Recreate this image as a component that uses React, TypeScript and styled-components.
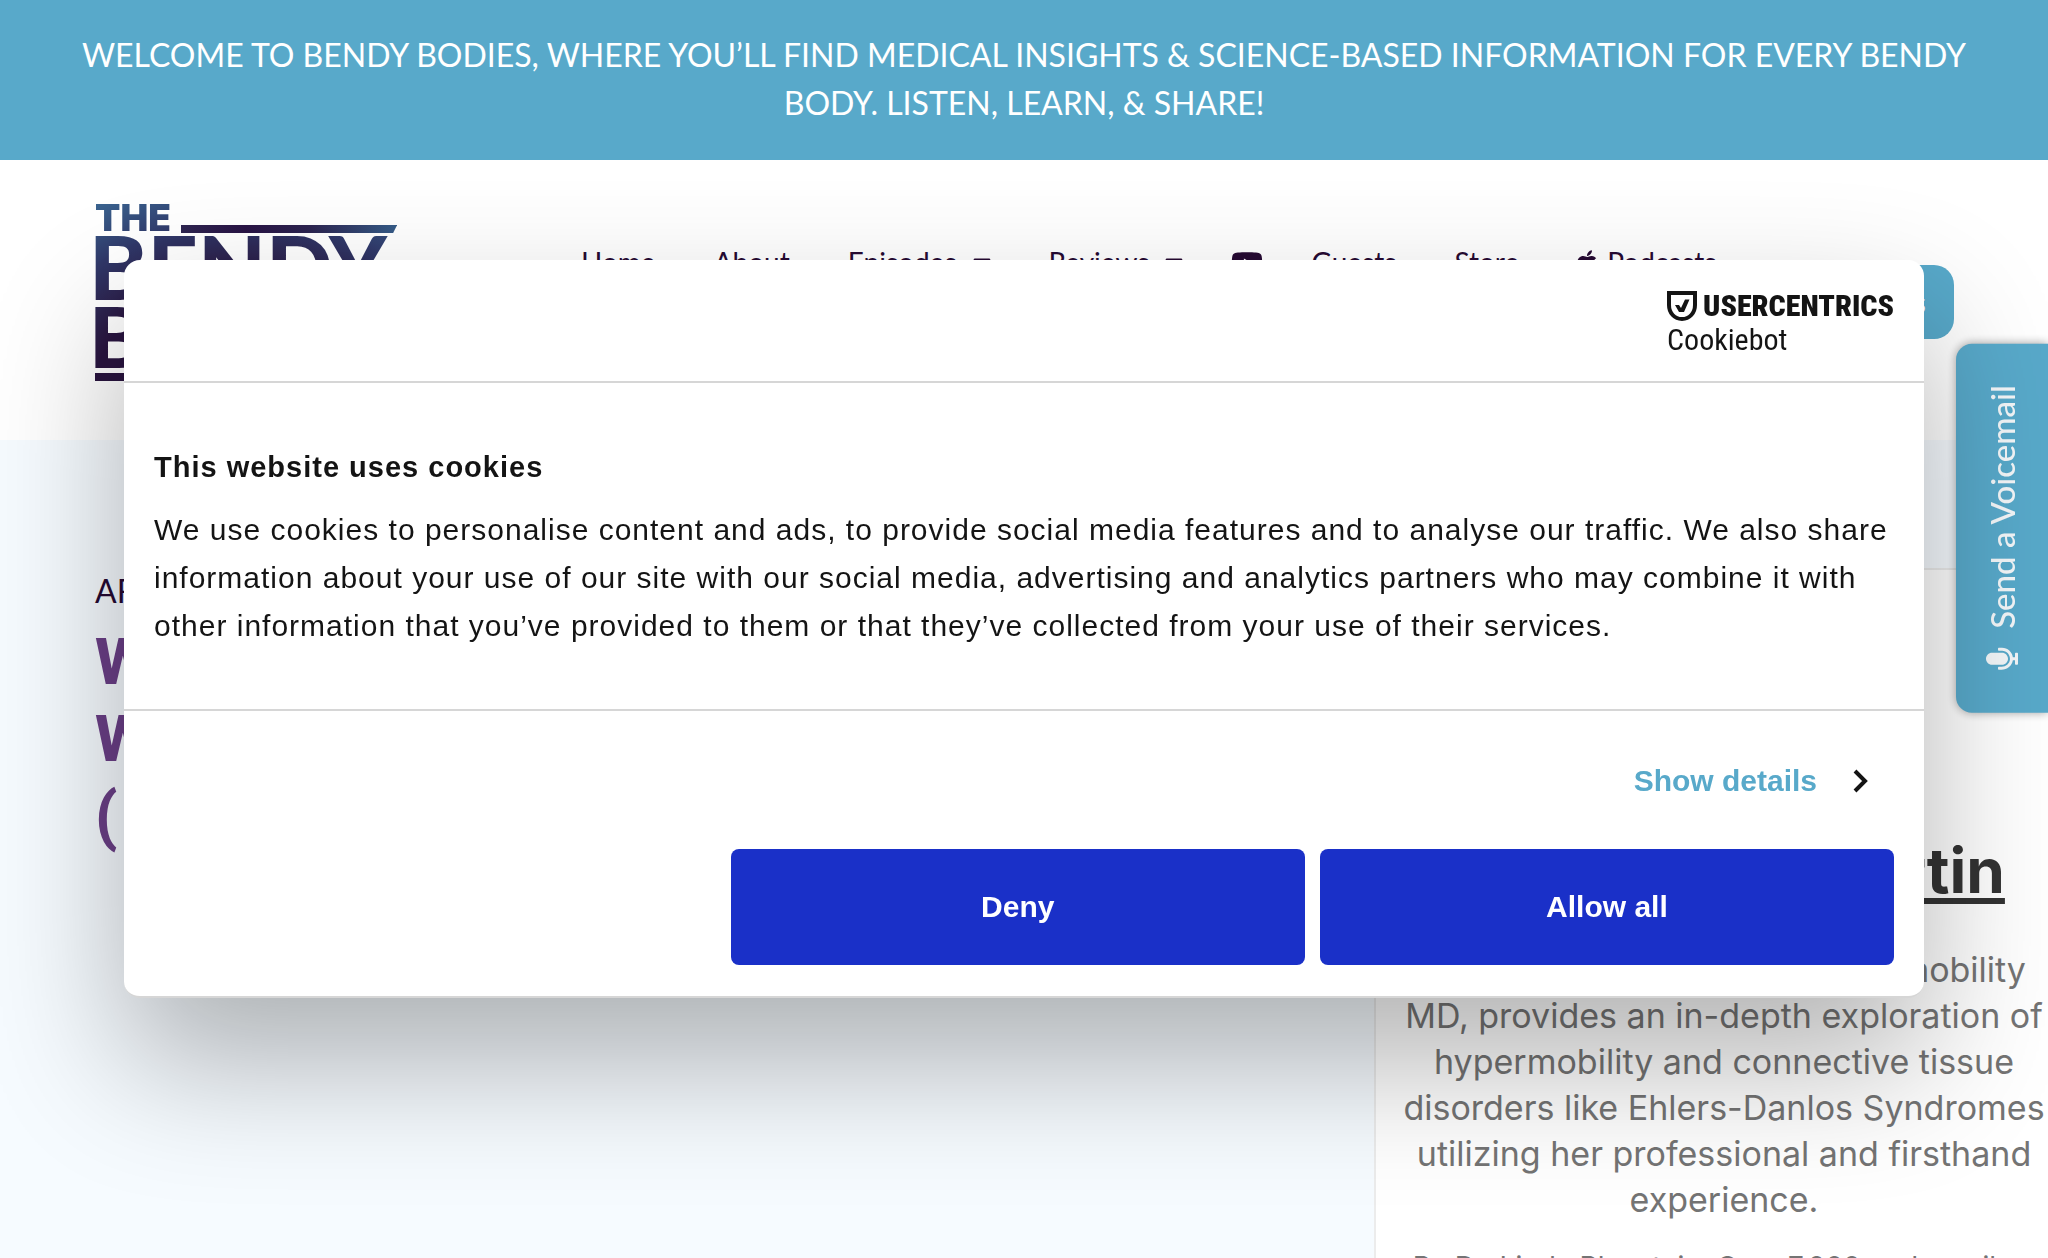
import React from "react";
import styled, { createGlobalStyle } from "styled-components";
import { FaApple, FaCaretDown, FaMicrophone, FaYoutube } from "react-icons/fa";

const rounded = `Lato, "Open Sans", sans-serif`;
const system = `Inter, Roboto, sans-serif`;
const helvetica = `"Liberation Sans", Arial, sans-serif`;
const condensed = `"Roboto Condensed", Roboto, sans-serif`;
const teal = "#58a9ca";
const plum = "#260a33";

const GlobalStyle = createGlobalStyle`
  *, *::before, *::after { box-sizing: border-box; }
  html, body { margin: 0; height: 100%; }
  body { overflow: hidden; background: #f6fbff; font-family: ${rounded}; color: ${plum}; }
  h1, h2, p, ul { margin: 0; padding: 0; }
  a { color: inherit; text-decoration: none; }
  button { font: inherit; border: 0; cursor: pointer; }
`;

const Page = styled.div`
  height: 100vh;
  overflow: hidden;
`;

const Banner = styled.p`
  padding: 31px 70px 33px;
  background: ${teal};
  color: #fff;
  font-size: 32px;
  line-height: 48px;
  text-align: center;
`;

const Header = styled.header`
  display: flex;
  align-items: flex-start;
  height: 280px;
  padding: 40px 94px 0 95px;
  background: #fff;
`;

const Logo = styled.a`
  display: block;
  flex: none;
  width: 302px;
  font-weight: 900;
`;

const LogoWords = styled.span`
  display: block;
  background: radial-gradient(
    100% 130% at 50% 110%,
    #29143f 50%,
    #2d2450 60%,
    #30396a 75%,
    #3c6b96 100%
  );
  background-clip: text;
  -webkit-background-clip: text;
  color: transparent;
`;

const LogoTop = styled.span`
  display: flex;
  align-items: flex-end;
  gap: 10px;
  height: 33px;
`;

const LogoThe = styled.span`
  font-family: ${system};
  font-size: 37px;
  line-height: 30px;
`;

const LogoWord = styled.span<{ $size: number; $line: number }>`
  display: block;
  font-size: ${(p) => p.$size}px;
  line-height: ${(p) => p.$line}px;
  text-indent: -6px;
`;

const LogoRule = styled.svg`
  display: block;
  flex: 1;
  width: 100%;
  min-width: 0;
  height: 8px;
`;

const Nav = styled.nav`
  flex: 1;
  padding: 44px 0 0 184px;
`;

const NavList = styled.ul`
  display: flex;
  align-items: center;
  gap: 58px;
  list-style: none;
`;

const NavLink = styled.a<{ $icon?: boolean }>`
  display: flex;
  align-items: center;
  gap: 10px;
  margin: ${(p) => (p.$icon ? "0 -10px" : "0")};
  font-size: 28px;
  line-height: 36px;
`;

const Caret = styled(FaCaretDown)`
  width: 18px;
  height: 30px;
  margin-left: 6px;
`;

const AppleIcon = styled(FaApple)`
  width: 20px;
  height: 28px;
`;

const YoutubeIcon = styled(FaYoutube)`
  width: 32px;
  height: 30px;
  margin-top: 2px;
`;

const Cta = styled.a`
  flex: none;
  margin-top: 65px;
  padding: 19px 28px;
  border-radius: 20px;
  background: ${teal};
  color: #fff;
  font-size: 28px;
  line-height: 36px;
`;

const Main = styled.main`
  display: grid;
  grid-template-columns: minmax(0, 1fr) 700px;
  margin-right: -26px;
`;

const Article = styled.section`
  padding: 131px 40px 0 95px;
`;

const Eyebrow = styled.p`
  font-size: 32px;
  line-height: 40px;
`;

const Title = styled.h1`
  padding-top: 13px;
  color: #6b3f87;
  font-family: Roboto, sans-serif;
  font-size: 64px;
  font-weight: 800;
  line-height: 77px;
`;

const TitleLine = styled.span`
  display: block;
`;

const Card = styled.aside`
  min-height: 900px;
  margin-top: 128px;
  padding: 263px 20px 0;
  border: 2px solid #ececec;
  background: #fff;
  font-family: ${system};
  text-align: center;
`;

const CardTitle = styled.h2`
  color: #333;
  font-size: 62px;
  line-height: 76px;
  text-decoration: underline;
  text-decoration-thickness: 6px;
  text-underline-offset: 5px;
`;

const CardText = styled.p`
  margin-top: 38px;
  color: #747474;
  font-size: 34px;
  line-height: 46px;
`;

const CardNote = styled.p`
  margin-top: 25px;
  color: #747474;
  font-size: 28px;
  line-height: 38px;
`;

const Voicemail = styled.button`
  position: fixed;
  top: 344px;
  right: 0;
  display: flex;
  align-items: center;
  gap: 14px;
  width: 92px;
  padding: 38px 30px 41px;
  border-radius: 0 16px 16px 0;
  background: ${teal};
  box-shadow: 0 0 10px rgba(0, 0, 0, 0.35);
  color: #f3f6f8;
  font-family: ${rounded};
  font-size: 33px;
  font-weight: 500;
  line-height: 32px;
  writing-mode: vertical-rl;
  transform: rotate(180deg);
`;

const Mic = styled(FaMicrophone)`
  flex: none;
  width: 32px;
  height: 32px;
  transform: rotate(90deg);
`;

const Overlay = styled.div`
  position: fixed;
  inset: 0;
  display: flex;
  align-items: center;
  justify-content: center;
  padding: 0 124px;
`;

const Dialog = styled.section`
  width: 100%;
  max-width: 1800px;
  border-bottom: 2px solid #d6d6d6;
  border-radius: 16px;
  background: #fff;
  box-shadow: 0 64px 136px rgba(0, 0, 0, 0.3);
  color: #141414;
  font-family: ${helvetica};
  font-size: 30px;
  line-height: 48px;
`;

const DialogHead = styled.header`
  display: flex;
  justify-content: flex-end;
  height: 123px;
  padding: 28px 30px 0;
  border-bottom: 2px solid #d6d6d6;
`;

const Brand = styled.a`
  display: block;
  font-family: ${condensed};
`;

const BrandRow = styled.span`
  display: flex;
  align-items: center;
  gap: 6px;
`;

const BrandName = styled.span`
  font-size: 30px;
  line-height: 36px;
  font-weight: 900;
`;

const Product = styled.span`
  display: block;
  font-size: 30px;
  line-height: 32px;
`;

const DialogBody = styled.div`
  padding: 60px 30px 59px;
  border-bottom: 2px solid #d6d6d6;
  letter-spacing: 1px;
`;

const DialogTitle = styled.h2`
  margin-bottom: 15px;
  font-size: 29px;
  line-height: 48px;
`;

const DialogFoot = styled.footer`
  padding: 46px 30px 31px;
  font-weight: 700;
`;

const DetailsRow = styled.div`
  display: flex;
  justify-content: flex-end;
  padding-right: 24px;
`;

const Details = styled.button`
  display: flex;
  align-items: center;
  gap: 35px;
  padding: 0;
  background: none;
  color: ${teal};
`;

const Actions = styled.div`
  display: flex;
  justify-content: flex-end;
  gap: 15px;
  margin-top: 44px;
`;

const Action = styled.button`
  width: 33%;
  padding: 34px 16px;
  border-radius: 8px;
  background: #1a30c8;
  color: #fff;
`;

const links = [
  { label: "Home" },
  { label: "About" },
  { label: "Episodes", menu: true },
  { label: "Reviews", menu: true },
  { label: "YouTube", youtube: true },
  { label: "Guests" },
  { label: "Store" },
  { label: "Podcasts", apple: true },
];

export default function App() {
  return (
    <>
      <GlobalStyle />
      <Page>
        <Banner>
          WELCOME TO BENDY BODIES, WHERE YOU’LL FIND MEDICAL INSIGHTS &amp; SCIENCE-BASED
          INFORMATION FOR EVERY BENDY BODY. LISTEN, LEARN, &amp; SHARE!
        </Banner>
        <Header>
          <Logo href="#">
            <LogoWords>
              <LogoTop>
                <LogoThe>THE</LogoThe>
                <LogoRule viewBox="0 0 216 8" preserveAspectRatio="none" aria-hidden="true">
                  <defs>
                    <linearGradient id="rule">
                      <stop offset="0" stopColor="#2d2450" />
                      <stop offset="0.3" stopColor="#291445" />
                      <stop offset="0.6" stopColor="#2c2450" />
                      <stop offset="1" stopColor="#365c88" />
                    </linearGradient>
                  </defs>
                  <path d="M0 0H216L212 8H0Z" fill="url(#rule)" />
                </LogoRule>
              </LogoTop>
              <LogoWord $size={88} $line={66}>
                BENDY
              </LogoWord>
              <LogoWord $size={84} $line={74}>
                BODIES
              </LogoWord>
            </LogoWords>
            <LogoRule viewBox="0 0 216 8" preserveAspectRatio="none" aria-hidden="true">
              <path d="M0 0H216V8H0Z" fill="#29143f" />
            </LogoRule>
          </Logo>
          <Nav aria-label="Main">
            <NavList>
              {links.map((l) => (
                <li key={l.label}>
                  <NavLink href="#" aria-label={l.label} $icon={l.youtube}>
                    {l.apple && <AppleIcon />}
                    {l.youtube ? <YoutubeIcon /> : l.label}
                    {l.menu && <Caret />}
                  </NavLink>
                </li>
              ))}
            </NavList>
          </Nav>
          <Cta href="#">Contact Us</Cta>
        </Header>
        <Main>
          <Article>
            <Eyebrow>ARTICLES</Eyebrow>
            <Title>
              <TitleLine>Welcome</TitleLine>
              <TitleLine>With Us</TitleLine>
              <TitleLine>( 101 )</TitleLine>
            </Title>
          </Article>
          <Card>
            <CardTitle>Dr. Norris A Martin</CardTitle>
            <CardText>
              Dr. Linda Bluestein, the Hypermobility MD, provides an in-depth exploration of
              hypermobility and connective tissue disorders like Ehlers-Danlos Syndromes utilizing
              her professional and firsthand experience.
            </CardText>
            <CardNote>By Dr. Linda Bluestein, Over 7,000 and email us</CardNote>
          </Card>
        </Main>
      </Page>
      <Voicemail type="button">
        <Mic />
        Send a Voicemail
      </Voicemail>
      <Overlay>
        <Dialog role="dialog" aria-labelledby="cookie-title">
          <DialogHead>
            <Brand href="#">
              <BrandRow>
                <svg width="30" height="30" viewBox="0 0 30 30" fill="none" aria-hidden="true">
                  <path
                    d="M2 2H28V14C28 22 22.500 28 15 28S2 22 2 14Z"
                    stroke="#141414"
                    strokeWidth="4"
                  />
                  <path d="M8 14H12L14 17L18 8.500H22.500L17 21H12Z" fill="#141414" />
                </svg>
                <BrandName>USERCENTRICS</BrandName>
              </BrandRow>
              <Product>Cookiebot</Product>
            </Brand>
          </DialogHead>
          <DialogBody>
            <DialogTitle id="cookie-title">This website uses cookies</DialogTitle>
            <p>
              We use cookies to personalise content and ads, to provide social media features and
              to analyse our traffic. We also share information about your use of our site with our
              social media, advertising and analytics partners who may combine it with other
              information that you’ve provided to them or that they’ve collected from your use of
              their services.
            </p>
          </DialogBody>
          <DialogFoot>
            <DetailsRow>
              <Details type="button">
                Show details
                <svg width="18" height="24" viewBox="0 0 18 24" fill="none" aria-hidden="true">
                  <path d="M3 2L13 12L3 22" stroke="#141414" strokeWidth="4" />
                </svg>
              </Details>
            </DetailsRow>
            <Actions>
              <Action type="button">Deny</Action>
              <Action type="button">Allow all</Action>
            </Actions>
          </DialogFoot>
        </Dialog>
      </Overlay>
    </>
  );
}
